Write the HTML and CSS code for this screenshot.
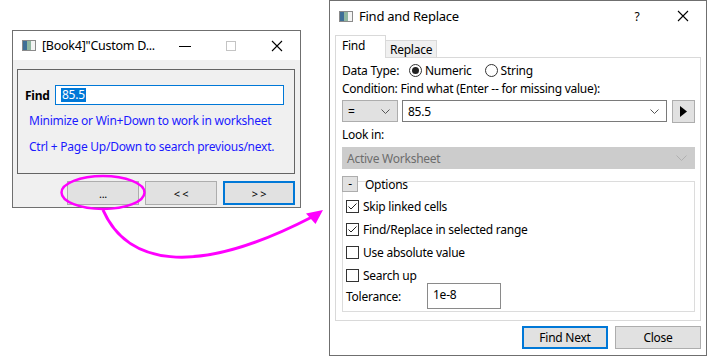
FILE: index.html
```html
<!DOCTYPE html>
<html>
<head>
<meta charset="utf-8">
<link rel="stylesheet" href="styles.css">
</head>
<body>
<div class="desk">
  <div class="win win-left">
    <div class="titlebar">
      <svg class="appicon" width="14" height="11" viewBox="0 0 14 11"><rect x="0.5" y="0.5" width="13" height="10" fill="#e8e8e8" stroke="#8a8a8a"/><rect x="1" y="1" width="4" height="9" fill="#3f6f96"/><rect x="5" y="1" width="4" height="9" fill="#8fb6a0"/><rect x="9" y="1" width="4" height="9" fill="#f4f4f4"/></svg>
      <span class="title">[Book4]"Custom D...</span>
      <div class="caps">
        <span class="cap"><svg width="12" height="12" viewBox="0 0 12 12"><path d="M0 6.5H12" stroke="#000" stroke-width="1"/></svg></span>
        <span class="cap"><svg width="12" height="12" viewBox="0 0 12 12"><rect x="1.5" y="1.5" width="9" height="9" fill="none" stroke="#c4c4c4"/></svg></span>
        <span class="cap"><svg width="12" height="12" viewBox="0 0 12 12"><path d="M1 1L11 11M11 1L1 11" stroke="#000" stroke-width="1.1"/></svg></span>
      </div>
    </div>
    <div class="lbody">
      <div class="lgroup">
        <div class="findrow">
          <span class="findlbl">Find</span>
          <div class="findinput"><span class="sel">85.5</span></div>
        </div>
        <div class="hint">Minimize or Win+Down to work in worksheet</div>
        <div class="hint hint2">Ctrl + Page Up/Down to search previous/next.</div>
      </div>
      <div class="lbtns">
        <div class="btn">...</div>
        <div class="btn">&lt; &lt;</div>
        <div class="btn btn-def">&gt; &gt;</div>
      </div>
    </div>
  </div>

  <div class="win win-right">
    <div class="titlebar rtitle">
      <svg class="appicon" width="14" height="11" viewBox="0 0 14 11"><rect x="0.5" y="0.5" width="13" height="10" fill="#e8e8e8" stroke="#8a8a8a"/><rect x="1" y="1" width="4" height="9" fill="#3f6f96"/><rect x="5" y="1" width="4" height="9" fill="#8fb6a0"/><rect x="9" y="1" width="4" height="9" fill="#f4f4f4"/></svg>
      <span class="title rt">Find and Replace</span>
      <div class="caps">
        <span class="cap qmark">?</span>
        <span class="cap"><svg width="12" height="12" viewBox="0 0 12 12"><path d="M1 1L11 11M11 1L1 11" stroke="#000" stroke-width="1.1"/></svg></span>
      </div>
    </div>
    <div class="rbody">
      <div class="tabs">
        <div class="tab tab-on">Find</div>
        <div class="tab">Replace</div>
      </div>
      <div class="panel">
        <div class="row r18">
          <span class="lbl-dt">Data Type:</span>
          <span class="radio on"></span><span class="rlbl">Numeric</span>
          <span class="radio r2"></span><span class="rlbl">String</span>
        </div>
        <div class="row r18">Condition: Find what (Enter -- for missing value):</div>
        <div class="row combos">
          <div class="combo cb-op"><span>=</span><svg class="chev" width="9" height="5" viewBox="0 0 9 5"><path d="M0.5 0.5L4.5 4.5L8.5 0.5" fill="none" stroke="#555"/></svg></div>
          <div class="combo cb-val"><span>85.5</span><svg class="chev" width="9" height="5" viewBox="0 0 9 5"><path d="M0.5 0.5L4.5 4.5L8.5 0.5" fill="none" stroke="#555"/></svg></div>
          <div class="arrowbtn"><svg width="7" height="11" viewBox="0 0 7 11"><path d="M0 0L7 5.5L0 11Z" fill="#000"/></svg></div>
        </div>
        <div class="row r18 lookin">Look in:</div>
        <div class="combo cb-dis"><span>Active Worksheet</span><svg class="chev" width="11" height="6" viewBox="0 0 11 6"><path d="M0.5 0.5L5.5 5.5L10.5 0.5" fill="none" stroke="#b0b0b0"/></svg></div>
        <div class="opts">
          <div class="opthead">
            <div class="minus">-</div>
            <span class="optlbl">Options</span>
          </div>
          <div class="optbox">
            <div class="chk"><span class="box"><svg width="11" height="11" viewBox="0 0 11 11"><path d="M1.5 5.5L4 8L9.5 2.5" fill="none" stroke="#222" stroke-width="1"/></svg></span>Skip linked cells</div>
            <div class="chk"><span class="box"><svg width="11" height="11" viewBox="0 0 11 11"><path d="M1.5 5.5L4 8L9.5 2.5" fill="none" stroke="#222" stroke-width="1"/></svg></span>Find/Replace in selected range</div>
            <div class="chk"><span class="box"></span>Use absolute value</div>
            <div class="chk"><span class="box"></span>Search up</div>
            <div class="tolrow">
              <span class="tollbl">Tolerance:</span>
              <div class="tolinput">1e-8</div>
            </div>
          </div>
        </div>
      </div>
      <div class="rbtns">
        <div class="btn rbtn btn-def">Find Next</div>
        <div class="btn rbtn">Close</div>
      </div>
    </div>
  </div>

  <svg class="overlay" width="707" height="356" viewBox="0 0 707 356">
    <ellipse cx="103" cy="192.5" rx="41.5" ry="16.5" fill="none" stroke="#ff00ff" stroke-width="2.5"/>
    <path d="M103 210 C 126 262, 190 280, 312 217" fill="none" stroke="#ff00ff" stroke-width="3"/>
    <path d="M323 210 L306 213.5 L315.5 224 Z" fill="#ff00ff"/>
  </svg>
</div>
</body>
</html>
```

FILE: styles.css
```css
* { box-sizing: border-box; }
html, body { margin: 0; padding: 0; background: #fff; }
body {
  font-family: "Noto Sans", "Open Sans", sans-serif;
  font-size: 12px;
  letter-spacing: -0.25px;
  color: #000;
}
.desk { position: relative; width: 707px; height: 356px; overflow: hidden; }

.win { position: absolute; border: 1px solid #6f6f6f; display: flex; flex-direction: column; }
.win-left { left: 12px; top: 30px; width: 289px; height: 178px; background: #f0f0f0; }
.win-right { left: 329px; top: 0; width: 378px; height: 356px; background: #fff; }

.titlebar { height: 29px; background: #fff; display: flex; align-items: center; padding-left: 9px; flex: none; }
.rtitle { height: 32px; padding-bottom: 2px; }
.appicon { flex: none; }
.title { margin-left: 6px; font-size: 12.5px; white-space: nowrap; }
.rt { font-size: 13px; }
.caps { margin-left: auto; display: flex; height: 100%; }
.cap { width: 46px; display: flex; align-items: center; justify-content: center; }
.qmark { font-size: 12px; }

.lbody { flex: 1; padding: 9px 5px 0 4px; display: flex; flex-direction: column; }
.lgroup { border: 1px solid #646464; height: 105px; padding: 15px 0 0 7px; }
.findrow { display: flex; align-items: center; height: 20px; }
.findlbl { font-weight: bold; width: 30px; }
.findinput { width: 229px; height: 20px; border: 1px solid #0078d7; background: #fff; display: flex; align-items: center; padding-left: 5px; }
.sel { background: #0078d7; color: #fff; line-height: 14px; padding: 0 1px; }
.hint { color: #1a1aff; margin: 7px 0 0 4px; height: 18px; line-height: 18px; white-space: nowrap; }
.hint2 { margin-top: 8px; }

.lbtns { display: flex; justify-content: flex-end; gap: 6px; margin-top: 7px; }
.btn { width: 72px; height: 24px; background: #e1e1e1; border: 1px solid #adadad; display: flex; align-items: center; justify-content: center; font-size: 11px; }
.btn-def { border: 2px solid #0078d7; }

.rbody { flex: 1; padding: 1px 5px 0 5px; display: flex; flex-direction: column; }
.tabs { display: flex; align-items: flex-end; height: 23px; flex: none; }
.tab { height: 17px; padding: 0 4px; border: 1px solid #d9d9d9; border-bottom: none; background: #f0f0f0; display: flex; align-items: center; margin-left: -1px; }
.tab-on { height: 23px; width: 51px; background: #fff; margin-left: 0; padding-left: 6px; align-items: flex-start; padding-top: 1px; position: relative; z-index: 1; margin-bottom: -1px; }
.panel { height: 264px; flex: none; border: 1px solid #d9d9d9; padding: 3px 5px 0 6px; display: flex; flex-direction: column; }

.row { display: flex; align-items: center; white-space: nowrap; }
.r18 { height: 18px; flex: none; }
.lbl-dt { width: 67px; }
.radio { width: 13px; height: 13px; border: 1px solid #333; border-radius: 50%; background: #fff; display: inline-flex; align-items: center; justify-content: center; margin-right: 3px; }
.radio.on::after { content: ""; width: 7px; height: 7px; border-radius: 50%; background: #222; }
.r2 { margin-left: 13px; }

.combos { margin-top: 3px; height: 23px; flex: none; gap: 4px; align-items: flex-start; }
.combo { display: flex; align-items: center; padding: 0 7px 0 5px; flex: none; }
.combo .chev { margin-left: auto; }
.cb-op { width: 56px; height: 22px; background: #e1e1e1; border: 1px solid #adadad; }
.cb-val { flex: 1; height: 22px; background: #fff; border: 1px solid #7a7a7a; }
.arrowbtn { width: 23px; height: 23px; background: #e1e1e1; border: 1px solid #adadad; display: flex; align-items: center; justify-content: center; margin-left: 1px; }
.lookin { margin-top: 2px; }
.cb-dis { margin-top: 4px; height: 22px; background: #cccccc; color: #6d6d6d; padding-right: 8px; }

.opts { margin-top: 7px; display: flex; flex-direction: column; flex: none; }
.opthead { display: flex; align-items: center; height: 16px; position: relative; z-index: 1; }
.minus { width: 16px; height: 16px; background: #e1e1e1; border: 1px solid #adadad; display: flex; align-items: center; justify-content: center; line-height: 1; }
.optlbl { margin-left: 7px; }
.optbox { margin-top: -11px; border: 1px solid #dcdcdc; height: 131px; padding: 13px 0 0 3px; }
.chk { display: flex; align-items: center; height: 23px; white-space: nowrap; }
.box { width: 13px; height: 13px; border: 1px solid #333; background: #fff; margin-right: 4px; display: inline-flex; align-items: center; justify-content: center; }
.tolrow { display: flex; align-items: center; margin-top: -4px; height: 26px; }
.tollbl { width: 81px; }
.tolinput { width: 74px; height: 26px; border: 1px solid #8a8a8a; padding: 2px 0 0 5px; background: #fff; }

.rbtns { display: flex; justify-content: flex-end; gap: 7px; margin-top: 5px; }
.rbtn { width: 86px; height: 23px; font-size: 12px; }

.overlay { position: absolute; left: 0; top: 0; pointer-events: none; }
```
